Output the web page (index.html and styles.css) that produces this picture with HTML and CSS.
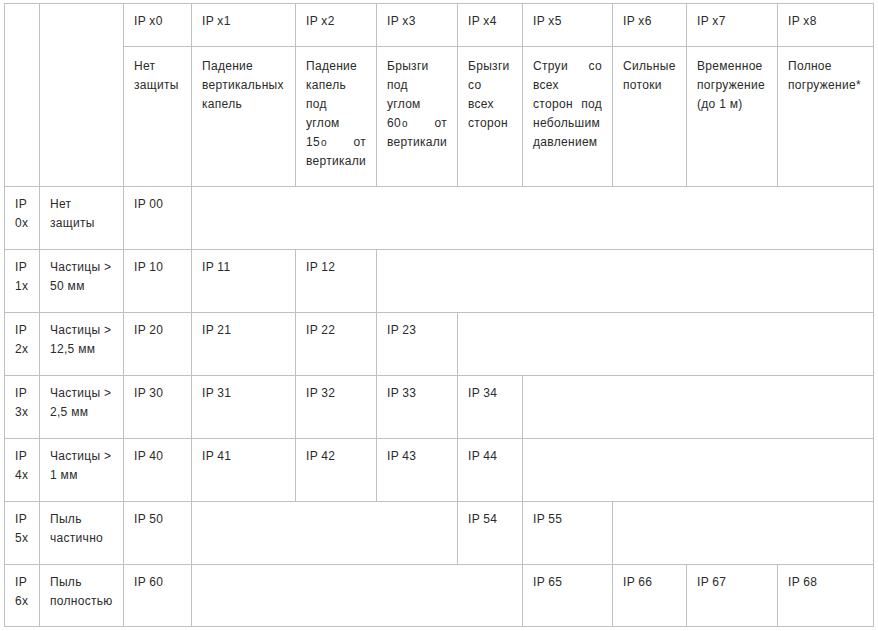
FILE: index.html
```html
<!DOCTYPE html>
<html lang="ru">
<head>
<meta charset="utf-8">
<title>IP</title>
<link rel="stylesheet" href="styles.css">
</head>
<body>
<table class="ip-table">
  <colgroup>
    <col class="c0"><col class="c1"><col class="c2"><col class="c3"><col class="c4"><col class="c5"><col class="c6"><col class="c7"><col class="c8"><col class="c9"><col class="c10">
  </colgroup>
  <tr class="head1">
    <td rowspan="2"></td>
    <td rowspan="2"></td>
    <td>IP x0</td>
    <td>IP x1</td>
    <td>IP x2</td>
    <td>IP x3</td>
    <td>IP x4</td>
    <td>IP x5</td>
    <td>IP x6</td>
    <td>IP x7</td>
    <td>IP x8</td>
  </tr>
  <tr class="head2">
    <td>Нет защиты</td>
    <td>Падение вертикальных капель</td>
    <td class="wide-gaps">Падение капель под углом 15<span class="deg">o</span> от вертикали</td>
    <td class="wide-gaps">Брызги под углом 60<span class="deg">o</span> от вертикали</td>
    <td class="wide-gaps">Брызги со всех сторон</td>
    <td class="wide-gaps">Струи со всех сторон под небольшим давлением</td>
    <td>Сильные потоки</td>
    <td>Временное погружение (до 1 м)</td>
    <td>Полное погружение*</td>
  </tr>
  <tr class="row">
    <td>IP 0x</td><td>Нет защиты</td><td>IP 00</td><td colspan="8"></td>
  </tr>
  <tr class="row">
    <td>IP 1x</td><td>Частицы &gt; 50 мм</td><td>IP 10</td><td>IP 11</td><td>IP 12</td><td colspan="6"></td>
  </tr>
  <tr class="row">
    <td>IP 2x</td><td>Частицы &gt; 12,5 мм</td><td>IP 20</td><td>IP 21</td><td>IP 22</td><td>IP 23</td><td colspan="5"></td>
  </tr>
  <tr class="row">
    <td>IP 3x</td><td>Частицы &gt; 2,5 мм</td><td>IP 30</td><td>IP 31</td><td>IP 32</td><td>IP 33</td><td>IP 34</td><td colspan="4"></td>
  </tr>
  <tr class="row">
    <td>IP 4x</td><td>Частицы &gt; 1 мм</td><td>IP 40</td><td>IP 41</td><td>IP 42</td><td>IP 43</td><td>IP 44</td><td colspan="4"></td>
  </tr>
  <tr class="row">
    <td>IP 5x</td><td>Пыль частично</td><td>IP 50</td><td colspan="3"></td><td>IP 54</td><td>IP 55</td><td colspan="3"></td>
  </tr>
  <tr class="row last">
    <td>IP 6x</td><td>Пыль полностью</td><td>IP 60</td><td colspan="4"></td><td>IP 65</td><td>IP 66</td><td>IP 67</td><td>IP 68</td>
  </tr>
</table>
</body>
</html>
```

FILE: styles.css
```css
html, body {
  background: #ffffff;
}
body {
  margin: 3px 0 0 4px;
  font-family: "Liberation Sans", Arial, sans-serif;
  font-size: 12px;
  line-height: 19px;
  letter-spacing: 0.3px;
  color: #2b2b2b;
}
.ip-table {
  border-collapse: collapse;
  table-layout: fixed;
  width: 870px;
}
.ip-table td {
  border: 1px solid #c0c0c0;
  padding: 8px 10px 0 10px;
  vertical-align: top;
  text-align: left;
}
.c0 { width: 35px; }
.c1 { width: 84px; }
.c2 { width: 68px; }
.c3 { width: 104px; }
.c4 { width: 81px; }
.c5 { width: 81px; }
.c6 { width: 65px; }
.c7 { width: 90px; }
.c8 { width: 74px; }
.c9 { width: 91px; }
.c10 { width: 96px; }
.head1 { height: 43px; }
.head2 { height: 140px; }
.head2 td {
  padding-top: 10px;
  text-align: justify;
}
.head2 td.wide-gaps {
  word-spacing: 3px;
}
.row { height: 63px; }
.row.last { height: 62px; }
.deg {
  font-size: 10px;
  margin-left: 1px;
  letter-spacing: 0;
}
```
